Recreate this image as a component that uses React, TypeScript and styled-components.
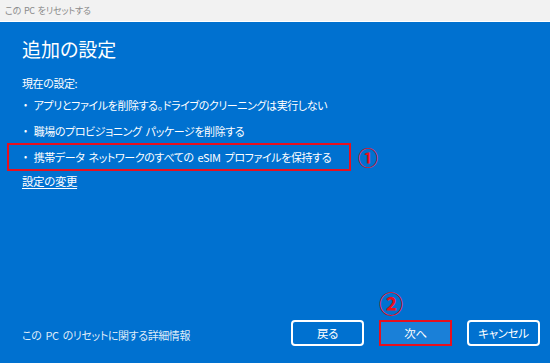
import styled, { createGlobalStyle } from "styled-components";

const GlobalStyle = createGlobalStyle`
  html, body {
    margin: 0;
    padding: 0;
  }
  body {
    width: 550px;
    height: 363px;
    overflow: hidden;
    font-family: "Noto Sans CJK JP", "Noto Sans", sans-serif;
  }
`;

const Window = styled.div`
  display: flex;
  flex-direction: column;
  width: 550px;
  height: 363px;
  background: #0071d0;
`;

const TitleBar = styled.div`
  height: 21px;
  flex: none;
  display: flex;
  align-items: center;
  padding-left: 5px;
  background: #f2f2f2;
  border-bottom: 1px solid #ffffff;
  color: #8a8a8a;
  font-size: 9px;
  letter-spacing: -0.2px;
  word-spacing: 1px;
  font-feature-settings: "palt";
  white-space: pre;
`;

const Panel = styled.div`
  flex: 1;
  display: flex;
  flex-direction: column;
  padding: 15px 10px 17px 22px;
  color: #ffffff;
  font-feature-settings: "palt";
  font-size: 11px;
  letter-spacing: -0.4px;
  word-spacing: 2px;
`;

const Heading = styled.h1`
  margin: 0;
  font-size: 19px;
  line-height: 24px;
  font-weight: 400;
  letter-spacing: 0;
`;

const Label = styled.div`
  margin-top: 14px;
  line-height: 16px;
`;

const List = styled.ul`
  list-style: none;
  margin: 1px 0 0;
  padding: 0;
  display: flex;
  flex-direction: column;
`;

const Row = styled.li`
  display: flex;
  align-items: center;
`;

const Item = styled.div<{ $marked?: boolean }>`
  display: flex;
  align-items: center;
  gap: 7px;
  width: ${(p) => (p.$marked ? "344px" : "auto")};
  margin-left: -15px;
  margin-top: ${(p) => (p.$marked ? "-1px" : "0")};
  padding: ${(p) => (p.$marked ? "4px" : "3px")} 0 ${(p) => (p.$marked ? "4px" : "3px")} 15px;
  border: 2px solid ${(p) => (p.$marked ? "#e8101e" : "transparent")};
  box-sizing: border-box;
  line-height: 16px;
  white-space: pre;
  &::before {
    content: "•";
    font-size: 9px;
  }
`;

const Mark = styled.span<{ $size: number }>`
  color: #e8101e;
  font-size: ${(p) => p.$size}px;
  line-height: 1;
  font-weight: 700;
  letter-spacing: 0;
`;

const ItemMark = styled(Mark)`
  margin-left: 7px;
`;

const Link = styled.a`
  margin-top: 2px;
  align-self: flex-start;
  color: #ffffff;
  font-size: 11.5px;
  line-height: 16px;
  text-decoration: underline;
  text-underline-offset: 2px;
`;

const Footer = styled.div`
  margin-top: auto;
  display: flex;
  align-items: center;
`;

const Info = styled.div`
  flex: 1;
  padding-top: 3px;
  color: rgba(255, 255, 255, 0.88);
  white-space: pre;
`;

const Buttons = styled.div`
  display: flex;
  gap: 15px;
`;

const ButtonWrap = styled.div`
  position: relative;
`;

const Button = styled.button<{ $primary?: boolean }>`
  width: 73px;
  height: 26px;
  border-radius: ${(p) => (p.$primary ? "0" : "4px")};
  border: 2px solid ${(p) => (p.$primary ? "#e8101e" : "#ffffff")};
  background: ${(p) => (p.$primary ? "#1a80d8" : "transparent")};
  color: #ffffff;
  font-family: inherit;
  font-size: 11.5px;
  font-feature-settings: "palt";
  letter-spacing: -0.3px;
  padding: 0;
`;

const StepBadge = styled(Mark)`
  position: absolute;
  left: 0;
  top: -29px;
`;

const items = [
  "アプリとファイルを削除する。ドライブのクリーニングは実行しない",
  "職場のプロビジョニング パッケージを削除する",
  "携帯データ ネットワークのすべての eSIM プロファイルを保持する",
];

export default function App() {
  return (
    <>
      <GlobalStyle />
      <Window>
        <TitleBar>この PC をリセットする</TitleBar>
        <Panel>
          <Heading>追加の設定</Heading>
          <Label>現在の設定:</Label>
          <List>
            {items.map((text, i) => (
              <Row key={text}>
                <Item $marked={i === 2}>{text}</Item>
                {i === 2 && <ItemMark $size={20}>①</ItemMark>}
              </Row>
            ))}
          </List>
          <Link href="#">設定の変更</Link>
          <Footer>
            <Info>この PC のリセットに関する詳細情報</Info>
            <Buttons>
              <Button>戻る</Button>
              <ButtonWrap>
                <StepBadge $size={24}>②</StepBadge>
                <Button $primary>次へ</Button>
              </ButtonWrap>
              <Button>キャンセル</Button>
            </Buttons>
          </Footer>
        </Panel>
      </Window>
    </>
  );
}
